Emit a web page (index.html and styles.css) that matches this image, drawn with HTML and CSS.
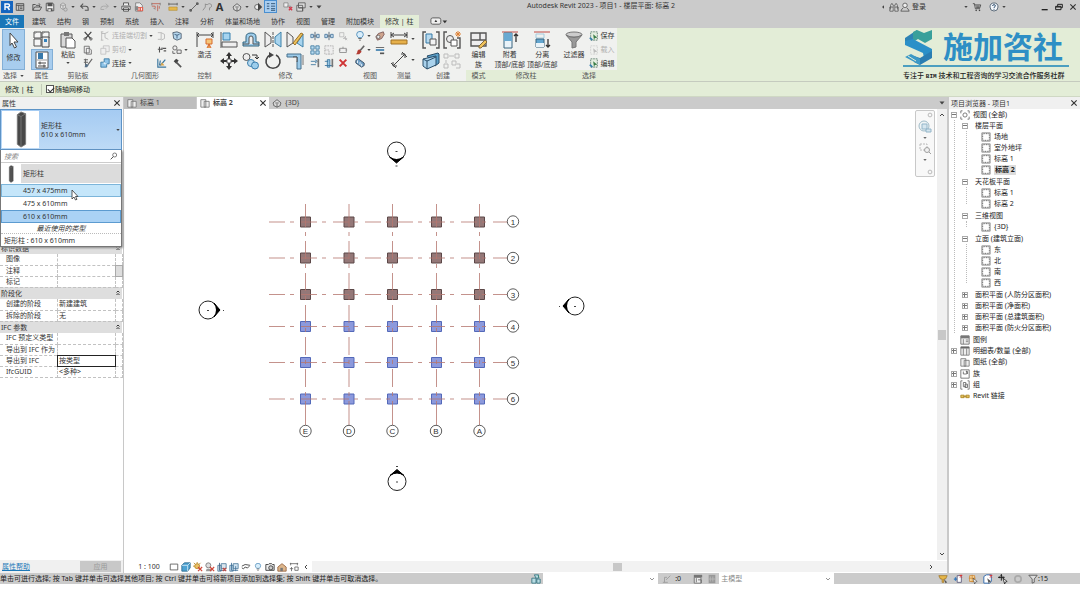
FILE: index.html
```html
<!DOCTYPE html>
<html lang="zh-CN">
<head>
<meta charset="utf-8">
<meta name="viewport" content="width=device-width, initial-scale=1">
<title>Autodesk Revit 2023 - 项目1 - 楼层平面: 标高 2</title>
<link rel="stylesheet" href="styles.css">
</head>
<body>
<svg class="defs" aria-hidden="true">
  <!-- small icons, 12 x 12 -->
  <symbol id="home" viewBox="0 0 12 12"><path d="M1.500 2h9v8h-9zM1.500 4h9M4.500 4v6M6 6h3M6 8h3" fill="none" stroke="#444"/></symbol>
  <symbol id="open" viewBox="0 0 12 12"><path d="M1 10V3h3l1 1h4v2M1 10l2-4h8.500l-2 4zM8 2l2 1" fill="none" stroke="#444"/></symbol>
  <symbol id="save" viewBox="0 0 12 12"><path d="M1.500 1.500h8l1 1v8h-9z" fill="#eee" stroke="#444"/><path d="M3 1h6v4H3zM3 7.500h6V11H3z" fill="#555"/><path d="M4 8.500h3V11H4z" fill="#ddd"/></symbol>
  <symbol id="sync" viewBox="0 0 12 12"><path d="M3 3l3-2 3 2v4L6 9 3 7zM3 3l3 2 3-2M6 5v4" fill="#ddd" stroke="#999"/><circle cx="9" cy="9" r="2" fill="none" stroke="#999"/></symbol>
  <symbol id="undo" viewBox="0 0 12 12"><path d="M5 2L2 5l3 3M2 5h6q3 0 3 3v2H7" fill="none" stroke="#555" stroke-width="1.300"/></symbol>
  <symbol id="redo" viewBox="0 0 12 12"><path d="M7 2l3 3-3 3M10 5H4Q1 5 1 8v1h4" fill="none" stroke="#aaa" stroke-width="1.200"/></symbol>
  <symbol id="print" viewBox="0 0 12 12"><path d="M3 4V1h6v3M1 5h10v4H1zM3 7h6v4H3z" fill="#eee" stroke="#444"/></symbol>
  <symbol id="pdf" viewBox="0 0 12 12"><path d="M2 1h5l3 3v7H2z" fill="#eee" stroke="#777"/><path d="M4 6h7v5H4z" fill="#e06050"/><path d="M1 5h4v5H1z" fill="#888"/><path d="M6 7v3M9 7v3" stroke="#fff"/></symbol>
  <symbol id="dims" viewBox="0 0 12 12"><path d="M1 2h10M1 5h4v3M8 4v7M10 5v3" fill="none" stroke="#c06050"/><path d="M1 1v3M11 1v3M3 7l2 2" stroke="#777"/></symbol>
  <symbol id="ruler" viewBox="0 0 12 12"><path d="M1 2.500h10M1 1v3M11 1v3" stroke="#555" fill="none"/><path d="M1 6h10v4H1z" fill="#e6b84c" stroke="#a98024" stroke-width=".6"/></symbol>
  <symbol id="line" viewBox="0 0 12 12"><path d="M2 10L10 2M1 9h2v2H1zM9 1h2v2H9z" stroke="#555" fill="#777"/></symbol>
  <symbol id="tag" viewBox="0 0 12 12"><path d="M1 10l3-4M4 3h3a2.500 2.500 0 1 1 2 4v3M4 6V2" stroke="#888" fill="none"/></symbol>
  <symbol id="view3d" viewBox="0 0 12 12"><path d="M1 6l5-4 5 4-1 1v2L6 11 2 9V7z" fill="#ddd" stroke="#555"/><path d="M6 7v4M4 6h4" stroke="#555"/></symbol>
  <symbol id="section" viewBox="0 0 12 12"><circle cx="5" cy="6" r="3" fill="#eee" stroke="#555"/><path d="M6 1l5 5-5 5z" fill="#444"/></symbol>
  <symbol id="thin" viewBox="0 0 12 12"><path d="M1 2h3M1 5h3M1 8h3M6 2h5M6 5h5M6 8h5M6 10h5" stroke="#246" fill="none"/></symbol>
  <symbol id="closewin" viewBox="0 0 12 12"><path d="M1 1h5v5H1zM5 5h4v4" fill="#eee" stroke="#888"/><path d="M7 6l4 4M11 6l-4 4" stroke="#d43a4c" stroke-width="1.600"/></symbol>
  <symbol id="switch" viewBox="0 0 12 12"><path d="M3 1h8v6H3zM1 4h7v7H1zM3 7h5v4" fill="#ddd" stroke="#555"/></symbol>
  <symbol id="binoc" viewBox="0 0 12 12"><path d="M2 9V4l1-2h1l1 2v1h2V4l1-2h1l1 2v5M1 6h4v5H1zM7 6h4v5H7z" fill="#ddd" stroke="#555"/></symbol>
  <symbol id="user" viewBox="0 0 12 12"><circle cx="6" cy="4" r="2.700" fill="#eee" stroke="#555"/><path d="M1 11q1-3 3-4M11 11q-1-3-3-4M1 11h10" fill="none" stroke="#555"/></symbol>
  <symbol id="cart" viewBox="0 0 12 12"><path d="M1 2h2l1 6h5l1.500-4.500H3M5 5h4M5 6.500h4" fill="none" stroke="#444"/><circle cx="5" cy="10" r="1" fill="#444"/><circle cx="9" cy="10" r="1" fill="#444"/></symbol>
  <symbol id="help" viewBox="0 0 12 12"><circle cx="6" cy="6" r="4.800" fill="#f4f7fb" stroke="#456"/><path d="M4.300 4.800q0-1.600 1.700-1.600T7.700 4.700Q7.600 5.600 6 6.500v.8M6 8.300v1" fill="none" stroke="#246" stroke-width="1.100"/></symbol>
  <symbol id="cut" viewBox="0 0 12 12"><path d="M2 1l7 8M10 1L3 9" stroke="#444" stroke-width="1.400"/><circle cx="2.500" cy="9.500" r="1.400" fill="none" stroke="#444"/><circle cx="9.500" cy="9.500" r="1.400" fill="none" stroke="#444"/></symbol>
  <symbol id="copy" viewBox="0 0 12 12"><path d="M1.500 1.500h6v8h-6zM4 4h4l2 2v5H4z" fill="#f4f4f4" stroke="#666"/></symbol>
  <symbol id="match" viewBox="0 0 12 12"><path d="M1 2h5M1 5h5M3 1v8M6 8l5-7" stroke="#666" stroke-width="1.300"/><path d="M3 7l4 1-2 3H2z" fill="#566f86"/></symbol>
  <symbol id="cope" viewBox="0 0 12 12"><path d="M2 1v10M2 3h4l4-2M6 3v5l4 2M1 1h3M1 11h3" stroke="#b5b5b5" fill="none"/></symbol>
  <symbol id="cutgeo" viewBox="0 0 12 12"><path d="M1 4h6v7H1zM4 4V1h7v7H7" stroke="#c0c0c0" fill="#eee"/></symbol>
  <symbol id="join" viewBox="0 0 12 12"><path d="M5 1h6v6H8v4H1V5h4z" fill="#8fc4e8" stroke="#33739f"/><path d="M5 5v2h3" stroke="#fff" fill="none"/></symbol>
  <symbol id="wallj" viewBox="0 0 12 12"><path d="M1 2h4v8H1M5 2l4 2v5l-4 2" stroke="#b5b5b5" fill="none"/></symbol>
  <symbol id="split" viewBox="0 0 12 12"><path d="M1 2l5-1 5 2v6L6 11 2 9z" fill="#b7d8ee" stroke="#456"/><path d="M3 4l3 1 3-1M6 5v4" stroke="#357" fill="none"/></symbol>
  <symbol id="beam" viewBox="0 0 12 12"><path d="M1 5h5M3 2v7M7 4h4M8 7h3M6 3v3" stroke="#555" stroke-width="1.300"/></symbol>
  <symbol id="unjoin" viewBox="0 0 12 12"><circle cx="3.500" cy="3.500" r="2.500" fill="#eee" stroke="#555"/><path d="M6 6h5v4H6zM1 7v3h3" fill="#eee" stroke="#555"/></symbol>
  <symbol id="paint" viewBox="0 0 12 12"><path d="M1 1v10h10M3 9l1-6M4 9l6-7" stroke="#39759f" stroke-width="1.400" fill="none"/><path d="M4 9l2-4 3 4z" fill="#dca84c"/></symbol>
  <symbol id="hammer" viewBox="0 0 12 12"><path d="M2 4l3-3 3 2-3 4z" fill="#444"/><path d="M5 5l6 6" stroke="#555" stroke-width="2"/></symbol>
  <symbol id="splitel" viewBox="0 0 12 12"><path d="M1 4h3v4H1zM8 4h3v4H8z" fill="#cbe2f3" stroke="#44749b"/><path d="M6 1v10M4 6h4" stroke="#456"/></symbol>
  <symbol id="array" viewBox="0 0 12 12"><path d="M1 1h4v4H1zM7 1h4v4H7zM1 7h4v4H1zM7 7h4v4H7z" fill="#b9dcf2" stroke="#3d789f"/></symbol>
  <symbol id="scale" viewBox="0 0 12 12"><path d="M1 1h10v10H1zM1 6h5v5" fill="#eee" stroke="#aaa" stroke-dasharray="2 1"/></symbol>
  <symbol id="trim" viewBox="0 0 12 12"><path d="M1 4h6M1 8h6M6 2l3 2-3 2" stroke="#35729c" fill="none"/><path d="M9 1h2v10H9z" fill="#777"/></symbol>
  <symbol id="trim2" viewBox="0 0 12 12"><path d="M1 4h4M1 9h10M4 2h3v9H4z" stroke="#35729c" fill="#9ac8e6"/><path d="M9 1h2v10H9z" fill="#777"/></symbol>
  <symbol id="unpin" viewBox="0 0 12 12"><path d="M2 2h5v5H2zM7 7l4 4M9 6v5M6 9h5" fill="none" stroke="#bbb"/></symbol>
  <symbol id="pin" viewBox="0 0 12 12"><path d="M2 4h8v5H2zM1 6h2M9 6h2M6 2v2" fill="#eee" stroke="#888"/></symbol>
  <symbol id="delete" viewBox="0 0 12 12"><path d="M2 2l8 8M10 2l-8 8" stroke="#cf3434" stroke-width="2.400"/></symbol>
  <symbol id="bulb" viewBox="0 0 12 12"><path d="M4 8Q2 6 2 4a4 3.500 0 0 1 8 0q0 2-2 4z" fill="#d9eefb" stroke="#4585b5"/><path d="M4 9h4M5 11h2" stroke="#555"/></symbol>
  <symbol id="hide" viewBox="0 0 12 12"><path d="M1 7l3-4 6-2 1 3-3 5-5 2z" fill="#cfa58e" stroke="#755"/><circle cx="4" cy="7" r="2" fill="#eee" stroke="#666"/></symbol>
  <symbol id="brush" viewBox="0 0 12 12"><path d="M11 1L6 7" stroke="#666" stroke-width="2"/><path d="M5 5l3 3-3 3H1q2-1 2-4z" fill="#b23c32"/></symbol>
  <symbol id="lw" viewBox="0 0 12 12"><path d="M1 3h10" stroke="#555"/><path d="M1 6h10" stroke="#3a7cad" stroke-width="2"/><path d="M6 10h5" stroke="#555" stroke-width="2"/></symbol>
  <symbol id="hidebox" viewBox="0 0 12 12"><path d="M1 3l3-2 7 5v3L8 11 1 6z" fill="#6f9fc6" stroke="#345"/><path d="M3 3v3M6 5v3M8 7v3" stroke="#fff"/></symbol>
  <symbol id="selset" viewBox="0 0 12 12"><path d="M2 1h8v10H2z" fill="#e4eee0" stroke="#576" stroke-dasharray="2 1"/><path d="M5 4l5 4-3 .5L6 11z" fill="#3a7d46"/><path d="M1 8l3 3" stroke="#347dac" stroke-width="2"/></symbol>
  <symbol id="selload" viewBox="0 0 12 12"><path d="M2 1h8v10H2z" fill="none" stroke="#ccc" stroke-dasharray="2 1"/><path d="M5 4l5 4-3 .5L6 11z" fill="#bbb"/></symbol>
  <symbol id="box" viewBox="0 0 12 12"><path d="M1.500 2.500h9v7h-9z" fill="#fff" stroke="#555"/></symbol>
  <symbol id="cube" viewBox="0 0 12 12"><path d="M1 4l3-3h7v6L8 11H1z" fill="#4ea3d3" stroke="#2d688c"/><path d="M1 4h7v7M8 4l3-3" fill="none" stroke="#d6edf8"/></symbol>
  <symbol id="sun" viewBox="0 0 12 12"><circle cx="5" cy="5" r="3" fill="#e9c165" stroke="#b88524"/><path d="M1 1l2 2M5 0v2M0 5h2M9 1L7 3" stroke="#b88524"/><path d="M6 6l5 5M11 6l-5 5" stroke="#d14537" stroke-width="1.400"/></symbol>
  <symbol id="shadow" viewBox="0 0 12 12"><circle cx="4" cy="4" r="3" fill="#ddd" stroke="#777"/><path d="M2 8h6v3H1z" fill="#999"/><path d="M6 6l5 5M11 6l-5 5" stroke="#d14537" stroke-width="1.400"/></symbol>
  <symbol id="crop" viewBox="0 0 12 12"><path d="M1 4h4v7H1zM5 2h6v6H5z" fill="#dbe6ee" stroke="#4f7d9e"/><path d="M3 1v9h8" fill="none" stroke="#3d5f80"/><path d="M7 7l4 4M11 7l-4 4" stroke="#c7443a" stroke-width="1.300"/></symbol>
  <symbol id="cropview" viewBox="0 0 12 12"><path d="M1 4h4v7H1zM5 2h6v6H5z" fill="#cfe3f1" stroke="#4f7d9e"/><path d="M3 1v9h8M8 5v6" fill="none" stroke="#3d6f98"/></symbol>
  <symbol id="glasses" viewBox="0 0 12 12"><path d="M1 5l4-2 6 1M1 7q2 3 4-1 3 3 5-1" fill="none" stroke="#555" stroke-width="1.200"/></symbol>
  <symbol id="camera" viewBox="0 0 12 12"><path d="M1 3h3l1-1h3l1 1h2v7H1z" fill="#eee" stroke="#333"/><circle cx="7" cy="7" r="2.500" fill="#ccc" stroke="#333"/></symbol>
  <symbol id="house" viewBox="0 0 12 12"><path d="M1 6l5-4 5 4v5H1z" fill="#ddb68c" stroke="#96613c"/><path d="M4 7h3v4H4z" fill="#777"/></symbol>
  <symbol id="limits" viewBox="0 0 12 12"><path d="M1 2h10M2 1v3M10 1v3M3 6v5M1 8h4M7 6h4v4H7z" fill="none" stroke="#666"/></symbol>
  <symbol id="workset" viewBox="0 0 12 12"><path d="M1 5h5v6H1zM4 1h5v4H6zM7 6h4v5H7z" fill="#b8dbe2" stroke="#31727f"/><path d="M8 2l2 2" stroke="#37946f"/></symbol>
  <symbol id="editable" viewBox="0 0 12 12"><path d="M1 10h6M3 10V4h3M5 7l5-5" fill="none" stroke="#999"/></symbol>
  <symbol id="options" viewBox="0 0 12 12"><path d="M1 1h10v3H1z" fill="#777"/><path d="M1.500 4h8v7h-8zM4 5v5M6 7h4v4" fill="#eee" stroke="#666"/></symbol>
  <symbol id="optset" viewBox="0 0 12 12"><path d="M2 1h8v10H2z" fill="#999"/><path d="M4 3v6M7 3v6M2 6h8" stroke="#bbb"/></symbol>
  <symbol id="fork" viewBox="0 0 12 12"><path d="M1 2h10L9 6H7v4H5V6H3z" fill="#e7b84a" stroke="#a67b2a"/><path d="M7 6l4 4-2 1z" fill="#555"/></symbol>
  <symbol id="sellink" viewBox="0 0 12 12"><path d="M1 6h4M3 4v4" stroke="#347bc0" stroke-width="1.500"/><path d="M5 2h5v8H5z" fill="#fff" stroke="#557"/><path d="M8 1l3 3M11 1L8 4" stroke="#d33" stroke-width="1.300"/></symbol>
  <symbol id="selunder" viewBox="0 0 12 12"><path d="M2 2h6v7H2zM5 1v9M1 5h8" fill="#f5dfae" stroke="#d08832"/><path d="M6 5l5 4-2 .5L8 12z" fill="#fff" stroke="#333" stroke-width=".7"/></symbol>
  <symbol id="selface" viewBox="0 0 12 12"><path d="M1 3l3-2h6v8l-2 2H1z" fill="#fff" stroke="#3b71b0" stroke-width="1.200"/><path d="M5 5l5 4-2 .5L7 12z" fill="#555"/><path d="M8 1l3 3M11 1L8 4" stroke="#d33" stroke-width="1.300"/></symbol>
  <symbol id="drag" viewBox="0 0 12 12"><path d="M4 0v8M0 4h8M3 2h2M2 3v2M6 3v2" stroke="#222" stroke-width="1.200"/><path d="M6 5l5 4-2 .5L8 12z" fill="#fff" stroke="#222"/></symbol>
  <symbol id="ring" viewBox="0 0 12 12"><circle cx="6" cy="6" r="3.800" fill="none" stroke="#aaa" stroke-width="2"/></symbol>
  <symbol id="filter" viewBox="0 0 12 12"><path d="M1 1.500h10L7.500 6v4L5 11V6z" fill="#ddd" stroke="#555"/></symbol>
  <symbol id="glass" viewBox="0 0 12 12"><circle cx="7" cy="4.500" r="3" fill="none" stroke="#444"/><path d="M5 7l-4 4" stroke="#444" stroke-width="1.400"/></symbol>
  <symbol id="x" viewBox="0 0 12 12"><path d="M2 2l8 8M10 2l-8 8" stroke="#333" stroke-width="1.700"/></symbol>
  <symbol id="plan" viewBox="0 0 12 12"><path d="M1 2h6v9H1zM5 4h6v7H5z" fill="#eee" stroke="#777"/></symbol>
  <symbol id="sheet" viewBox="0 0 12 12"><path d="M1 1h10v10H1z" fill="#fff" stroke="#888"/><path d="M2 2h8v8H2z" fill="none" stroke="#444" stroke-dasharray="1 1"/></symbol>
  <symbol id="views" viewBox="0 0 12 12"><path d="M1 4V1h2M9 1h2v3M11 8v3H9M3 11H1V8" fill="none" stroke="#666"/><circle cx="6" cy="6" r="2.500" fill="none" stroke="#666"/></symbol>
  <symbol id="legend" viewBox="0 0 12 12"><path d="M1 1h10v10H1z" fill="#eee" stroke="#666"/><path d="M1 1h10v3H1z" fill="#777"/><path d="M4 5v6M7 6h3M7 8h3" stroke="#777"/></symbol>
  <symbol id="sched" viewBox="0 0 12 12"><path d="M1 1h10v10H1zM4 3v8M8 3v8" fill="#eee" stroke="#777"/><path d="M1 1h10v2H1z" fill="#666"/></symbol>
  <symbol id="family" viewBox="0 0 12 12"><path d="M1 1h10v10H1zM4 3v3h4V2M7 3h2v3" fill="#fff" stroke="#666"/></symbol>
  <symbol id="groupi" viewBox="0 0 12 12"><path d="M3 1H1v10h2M9 1h2v10H9M4 3h3v5H4zM6 5h3v4H6z" fill="none" stroke="#666"/></symbol>
  <symbol id="chain" viewBox="0 0 12 12"><path d="M1 5h4v3H1zM7 5h4v3H7zM4 6.500h4" fill="#e2c15c" stroke="#ab8320"/></symbol>
  <symbol id="double" viewBox="0 0 12 12"><path d="M3 5l3-3 3 3M3 10l3-3 3 3" fill="none" stroke="#222" stroke-width="1.800"/></symbol>
  <symbol id="chev" viewBox="0 0 12 12"><path d="M2 4l4 4 4-4" fill="none" stroke="currentColor" stroke-width="1.800"/></symbol>
  <symbol id="caret" viewBox="0 0 12 12"><path d="M1 3h10L6 9z" fill="#444"/></symbol>
  <!-- large icons, 18 x 18 -->
  <symbol id="arrow" viewBox="0 0 18 18"><path d="M5 1l8 9H9l2.500 5-2 1L7 11l-2 2.500z" fill="#fff" stroke="#444" stroke-linejoin="round"/></symbol>
  <symbol id="typeprops" viewBox="0 0 18 18"><path d="M1 2h7v6H1zM9 2h7v6H9zM1 9h7v7H1z" fill="#f6f6f6" stroke="#555"/><path d="M9 7h7v10H9z" fill="#eee" stroke="#444"/><path d="M11 9h3v3h-3z" fill="#3482bd"/><path d="M1 4l3-2M9 4l3-2" stroke="#888"/></symbol>
  <symbol id="props" viewBox="0 0 18 18"><path d="M3 1h12v16H3z" fill="#fff" stroke="#555"/><path d="M5 2h5v6H5z" fill="#3979aa"/><path d="M4 9h10" stroke="#999"/><path d="M5 12h8M5 15h8M7 10.500v3M11 13.500v3" stroke="#444"/></symbol>
  <symbol id="paste" viewBox="0 0 18 18"><path d="M2 3h11v13H2z" fill="#d8d8d8" stroke="#555"/><path d="M5 1h5v4H5z" fill="#777"/><path d="M7 7h6l3 3v7H7z" fill="#fff" stroke="#555"/></symbol>
  <symbol id="activate" viewBox="0 0 18 18"><path d="M1 1v15M17 1v6M1 4h16M3 2L1 4l2 2M15 2l2 2-2 2" fill="none" stroke="#444"/><path d="M10 8h6v5h-6zM13 13v4M11 17l2-4 2 4" fill="#f5c67a" stroke="#d76a2d"/></symbol>
  <symbol id="align" viewBox="0 0 18 18"><path d="M1 1v16M2 11h15v5H2z" fill="#eee" stroke="#555"/><path d="M3 2h7v7H3z" fill="#a6d4f0" stroke="#3580b0"/></symbol>
  <symbol id="offset" viewBox="0 0 18 18"><path d="M1 15h16v-4h-3V6q0-4-5-4T4 6v5H1z" fill="#9ccceb" stroke="#33647f"/><path d="M1 13h6V7q0-2 2-2t2 2v6h6" fill="#eee" stroke="#555"/></symbol>
  <symbol id="mirror" viewBox="0 0 18 18"><path d="M1 1v15l6-4V6z" fill="#eee" stroke="#555"/><path d="M9 1v16" stroke="#555" stroke-dasharray="3 1"/><path d="M17 1v15l-6-4V6z" fill="#a8d4ee" stroke="#3c81a9"/></symbol>
  <symbol id="mirror2" viewBox="0 0 18 18"><path d="M1 1v15l6-4V6z" fill="#eee" stroke="#555"/><path d="M17 3v13l-6-4z" fill="#a8d4ee" stroke="#3c81a9"/><path d="M7 12L15 2l2 1-8 11z" fill="#edc25b" stroke="#9c7228"/></symbol>
  <symbol id="move" viewBox="0 0 18 18"><path d="M9 0l3 4H6zM9 18l3-4H6zM0 9l4-3v6zM18 9l-4-3v6z" fill="#333"/><path d="M9 3v4M9 11v4M3 9h4M11 9h4" stroke="#333" stroke-width="2"/><path d="M7 7h4v4H7z" fill="#fff" stroke="#555"/></symbol>
  <symbol id="copyel" viewBox="0 0 18 18"><circle cx="4.500" cy="5" r="3.500" fill="#eee" stroke="#555"/><circle cx="9" cy="11" r="3.500" fill="#b6daf0" stroke="#3b7eac"/><circle cx="13" cy="13.500" r="3.500" fill="#9bcdec" stroke="#3b7eac"/><path d="M10 3h5v4M13 5l2 2 2-2" fill="none" stroke="#333"/></symbol>
  <symbol id="rotate" viewBox="0 0 18 18"><path d="M12 3a7 7 0 1 1-6 0" fill="none" stroke="#444" stroke-width="1.600"/><path d="M5 0v6l5-3z" fill="#444"/></symbol>
  <symbol id="corner" viewBox="0 0 18 18"><path d="M1 5h10v12h4V2H1z" fill="#9ccbe9" stroke="#47718d"/><path d="M7 5h4v5" stroke="#444" fill="#eee"/><path d="M17 3v10" stroke="#777"/></symbol>
  <symbol id="measure" viewBox="0 0 18 18"><path d="M1 5h16M1 2v6M17 2v6M4 3L1 5l3 2M14 3l3 2-3 2" fill="none" stroke="#444"/><path d="M1 10h16v4H1z" fill="#e6b04a" stroke="#a27324"/></symbol>
  <symbol id="aligned" viewBox="0 0 18 18"><path d="M3 15L15 3M1 12l5 5M12 1l5 5M3 11v4h4M11 3h4v4" fill="none" stroke="#444"/></symbol>
  <symbol id="create1" viewBox="0 0 18 18"><path d="M4 1H1v16h3M14 1h3v16h-3" fill="none" stroke="#555" stroke-width="1.400"/><path d="M4 3h6v9H4z" fill="#b8daee" stroke="#377aa7"/><path d="M8 8h6v6H8z" fill="#f3f3f3" stroke="#555"/></symbol>
  <symbol id="create2" viewBox="0 0 18 18"><path d="M4 1H1v16h3M14 7h3v10h-3" fill="none" stroke="#555" stroke-width="1.400"/><circle cx="7" cy="8" r="3.500" fill="#eee" stroke="#555"/><path d="M8 9h6v6H8z" fill="#fff" stroke="#555"/><path d="M15 0v6M12 3h6M13 1l4 4M17 1l-4 4" stroke="#df8134"/></symbol>
  <symbol id="create3" viewBox="0 0 18 18"><path d="M5 4l11-3 1 1v9l-4 3z" fill="#5b9fc8" stroke="#294d68"/><path d="M1 7l13-3v9L5 17l-4-3z" fill="#a9d2ec" stroke="#294d68"/><path d="M1 7l4 2v8M5 9l9-4" fill="none" stroke="#294d68"/></symbol>
  <symbol id="create4" viewBox="0 0 18 18"><path d="M1 2h4v4H1zM12 2h4v4h-4zM6 4h5M3 8v3M1 12h4v4H1zM9 9h4v4H9zM14 12h3v4h-4" fill="none" stroke="#bbb"/></symbol>
  <symbol id="editfam" viewBox="0 0 18 18"><path d="M1 2h15v13H1zM10 2v7M1 9h15" fill="#eee" stroke="#555" stroke-width="1.400"/><path d="M9 15l6-6 2 2-6 6H9z" fill="#efc25a" stroke="#866a38"/></symbol>
  <symbol id="attach" viewBox="0 0 18 18"><path d="M1 1h16" stroke="#c04b45"/><path d="M3 2h8v15H3z" fill="#e9f3f9" stroke="#38657f"/><path d="M3 2h8v8H3z" fill="#69a9d1"/><path d="M15 3v8M13 5l2-2 2 2" fill="none" stroke="#333" stroke-width="1.300"/></symbol>
  <symbol id="detach" viewBox="0 0 18 18"><path d="M1 1h16" stroke="#c04b45"/><path d="M3 3h8v4H3z" fill="none" stroke="#a5ccdf"/><path d="M3 8h8v8H3z" fill="#62a6d0" stroke="#38657f"/><path d="M3 12h8v4H3z" fill="#e9f3f9"/><path d="M15 8v8M13 14l2 2 2-2" fill="none" stroke="#333" stroke-width="1.300"/></symbol>
  <symbol id="funnel" viewBox="0 0 18 18"><ellipse cx="9" cy="3.500" rx="8" ry="2.500" fill="#ccc" stroke="#777"/><path d="M1 4l6 7v6l4-1v-5l6-7q-8 5-16 0z" fill="#999" stroke="#777"/></symbol>
  <symbol id="column" viewBox="0 0 18 40"><path d="M5 4l4-3 5 2v33l-5 3-4-3z" fill="#484848" stroke="#777"/><path d="M5 4l4 2 5-3M9 6v32" fill="none" stroke="#777"/></symbol>
</svg>

<header class="titlebar">
  <div class="quick">
    <button aria-label="应用程序"><svg class="i12" viewBox="0 0 12 12"><path d="M0 0h12v12H0z" fill="#1565c0"/><path d="M4 9V3h3q1.500 0 1.500 1.500T7 6H4M6.500 6L8.500 9" fill="none" stroke="#fff" stroke-width="1.400"/></svg></button>
    <button aria-label="主页"><svg class="i10"><use href="#home"/></svg></button>
    <button class="apart" aria-label="打开"><svg class="i10"><use href="#open"/></svg></button>
    <button aria-label="保存"><svg class="i10"><use href="#save"/></svg></button>
    <button aria-label="同步"><svg class="i10"><use href="#sync"/></svg></button>
    <button class="drop" aria-label="同步选项"><svg class="i4"><use href="#caret"/></svg></button>
    <button aria-label="放弃"><svg class="i10"><use href="#undo"/></svg></button>
    <button class="drop" aria-label="放弃列表"><svg class="i4"><use href="#caret"/></svg></button>
    <button aria-label="重做"><svg class="i10"><use href="#redo"/></svg></button>
    <button class="drop" aria-label="重做列表"><svg class="i4"><use href="#caret"/></svg></button>
    <button aria-label="打印"><svg class="i10"><use href="#print"/></svg></button>
    <button aria-label="导出"><svg class="i10"><use href="#pdf"/></svg></button>
    <button class="apart" aria-label="尺寸"><svg class="i10"><use href="#dims"/></svg></button>
    <button class="apart" aria-label="测量"><svg class="i10"><use href="#ruler"/></svg></button>
    <button class="drop" aria-label="测量选项"><svg class="i4"><use href="#caret"/></svg></button>
    <button aria-label="对齐标注"><svg class="i10"><use href="#line"/></svg></button>
    <button aria-label="标记"><svg class="i10"><use href="#tag"/></svg></button>
    <button class="letter" aria-label="文字">A</button>
    <button class="apart" aria-label="三维视图"><svg class="i10"><use href="#view3d"/></svg></button>
    <button class="drop" aria-label="三维选项"><svg class="i4"><use href="#caret"/></svg></button>
    <button aria-label="剖面"><svg class="i10"><use href="#section"/></svg></button>
    <button class="on" aria-label="细线"><svg class="i10"><use href="#thin"/></svg></button>
    <button class="apart" aria-label="关闭非活动视图"><svg class="i10"><use href="#closewin"/></svg></button>
    <button aria-label="切换窗口"><svg class="i10"><use href="#switch"/></svg></button>
    <button class="drop" aria-label="窗口列表"><svg class="i4"><use href="#caret"/></svg></button>
    <button class="drop" aria-label="自定义"><svg class="i6"><use href="#caret"/></svg></button>
  </div>
  <h1 class="title">Autodesk Revit 2023 - 项目1 - 楼层平面: 标高 2</h1>
  <div class="account">
    <button class="drop" aria-label="收起"><svg class="i4 turn"><use href="#caret"/></svg></button>
    <button aria-label="搜索"><svg class="i10"><use href="#binoc"/></svg></button>
    <button class="login"><svg class="i10"><use href="#user"/></svg>登录</button>
    <button class="drop" aria-label="账户菜单"><svg class="i4"><use href="#caret"/></svg></button>
    <button aria-label="商店"><svg class="i10"><use href="#cart"/></svg></button>
    <button class="apart" aria-label="帮助"><svg class="i10"><use href="#help"/></svg></button>
    <button class="drop" aria-label="帮助菜单"><svg class="i4"><use href="#caret"/></svg></button>
  </div>
  <div class="window">
    <button aria-label="最小化"><svg class="i8" viewBox="0 0 12 12"><path d="M1 10h9" stroke="#222" stroke-width="2"/></svg></button>
    <button aria-label="还原"><svg class="i8" viewBox="0 0 12 12"><path d="M4 2h7v5H9M1 5h8v5H1zM4 2v3M1 6h8" fill="none" stroke="#222" stroke-width="1.500"/></svg></button>
    <button aria-label="关闭"><svg class="i8"><use href="#x"/></svg></button>
  </div>
</header>

<nav class="tabs">
  <a class="file" href="#file">文件</a>
  <a href="#t1">建筑</a><a href="#t2">结构</a><a href="#t3">钢</a><a href="#t4">预制</a><a href="#t5">系统</a><a href="#t6">插入</a><a href="#t7">注释</a><a href="#t8">分析</a><a href="#t9">体量和场地</a><a href="#t10">协作</a><a href="#t11">视图</a><a href="#t12">管理</a><a href="#t13">附加模块</a>
  <a class="current" href="#t14">修改 | 柱</a>
  <button aria-label="显示选项"><svg class="toggle-icon" viewBox="0 0 20 10"><rect x="1" y="1" width="11" height="7" rx="2" fill="#eee" stroke="#555"/><path d="M5 5.500h3L6.500 3z" fill="#333"/><path d="M14 4h5l-2.500 3z" fill="#333"/></svg></button>
</nav>

<section class="ribbon">
  <div class="panel p-select">
    <div class="body"><button class="big on"><svg class="i18"><use href="#arrow"/></svg>修改</button></div>
    <div class="label">选择 <svg class="i4"><use href="#caret"/></svg></div>
  </div>
  <div class="panel p-props">
    <div class="body"><div class="stack"><button aria-label="类型属性"><svg class="i18"><use href="#typeprops"/></svg></button><button class="on framed" aria-label="属性"><svg class="i18"><use href="#props"/></svg></button></div></div>
    <div class="label">属性</div>
  </div>
  <div class="panel p-clip">
    <div class="body">
      <button class="big"><svg class="i18"><use href="#paste"/></svg>粘贴<svg class="i4"><use href="#caret"/></svg></button>
      <div class="rows"><button aria-label="剪切"><svg class="i10"><use href="#cut"/></svg></button><button aria-label="复制"><svg class="i10"><use href="#copy"/></svg></button><button aria-label="匹配"><svg class="i10"><use href="#match"/></svg></button></div>
    </div>
    <div class="label">剪贴板</div>
  </div>
  <div class="panel p-geo">
    <div class="body">
      <div class="rows left">
        <button class="off"><svg class="i10"><use href="#cope"/></svg>连接端切割 <svg class="i4"><use href="#caret"/></svg></button>
        <button class="off"><svg class="i10"><use href="#cutgeo"/></svg>剪切 <svg class="i4"><use href="#caret"/></svg></button>
        <button><svg class="i10"><use href="#join"/></svg>连接 <svg class="i4"><use href="#caret"/></svg></button>
      </div>
      <div class="rows"><button aria-label="墙连接"><svg class="i10"><use href="#wallj"/></svg></button><button aria-label="梁柱连接"><svg class="i10"><use href="#beam"/></svg></button><button aria-label="填色"><svg class="i10"><use href="#paint"/></svg></button></div>
      <div class="rows left"><button aria-label="拆分面"><svg class="i10"><use href="#split"/></svg></button><button aria-label="取消连接"><svg class="i10"><use href="#unjoin"/></svg><svg class="i4"><use href="#caret"/></svg></button><button aria-label="拆除"><svg class="i10"><use href="#hammer"/></svg></button></div>
    </div>
    <div class="label">几何图形</div>
  </div>
  <div class="panel p-ctrl">
    <div class="body"><button class="big"><svg class="i18"><use href="#activate"/></svg>激活</button></div>
    <div class="label">控制</div>
  </div>
  <div class="panel p-modify">
    <div class="body">
      <div class="grid4">
        <button aria-label="对齐"><svg class="i18"><use href="#align"/></svg></button><button aria-label="偏移"><svg class="i18"><use href="#offset"/></svg></button><button aria-label="镜像拾取轴"><svg class="i18"><use href="#mirror"/></svg></button><button aria-label="镜像绘制轴"><svg class="i18"><use href="#mirror2"/></svg></button>
        <button aria-label="移动"><svg class="i18"><use href="#move"/></svg></button><button aria-label="复制图元"><svg class="i18"><use href="#copyel"/></svg></button><button aria-label="旋转"><svg class="i18"><use href="#rotate"/></svg></button><button aria-label="修剪为角"><svg class="i18"><use href="#corner"/></svg></button>
      </div>
      <div class="rows"><button aria-label="拆分图元"><svg class="i10"><use href="#splitel"/></svg></button><button aria-label="阵列"><svg class="i10"><use href="#array"/></svg></button><button aria-label="修剪"><svg class="i10"><use href="#trim"/></svg></button></div>
      <div class="rows"><button aria-label="用间隙拆分"><svg class="i10"><use href="#splitel"/></svg></button><button aria-label="缩放"><svg class="i10"><use href="#scale"/></svg></button><button aria-label="延伸"><svg class="i10"><use href="#trim2"/></svg></button></div>
      <div class="rows"><button aria-label="解锁"><svg class="i10"><use href="#unpin"/></svg></button><button aria-label="锁定"><svg class="i10"><use href="#pin"/></svg></button><button aria-label="删除"><svg class="i10"><use href="#delete"/></svg></button></div>
    </div>
    <div class="label">修改</div>
  </div>
  <div class="panel p-view">
    <div class="body">
      <div class="rows left"><button aria-label="隐藏"><svg class="i10"><use href="#bulb"/></svg> <svg class="i4"><use href="#caret"/></svg></button><button aria-label="替换"><svg class="i10"><use href="#brush"/></svg> <svg class="i4"><use href="#caret"/></svg></button><button aria-label="选择框"><svg class="i10"><use href="#hidebox"/></svg></button></div>
      <div class="rows"><button aria-label="置换"><svg class="i10"><use href="#hide"/></svg></button><button aria-label="线处理"><svg class="i10"><use href="#lw"/></svg></button></div>
    </div>
    <div class="label">视图</div>
  </div>
  <div class="panel p-measure">
    <div class="body"><div class="stack"><button aria-label="测量"><svg class="i18"><use href="#measure"/></svg><svg class="i4"><use href="#caret"/></svg></button><button aria-label="标注"><svg class="i18"><use href="#aligned"/></svg><svg class="i4"><use href="#caret"/></svg></button></div></div>
    <div class="label">测量</div>
  </div>
  <div class="panel p-create">
    <div class="body"><div class="grid2"><button aria-label="创建组"><svg class="i18"><use href="#create1"/></svg></button><button aria-label="创建类似"><svg class="i18"><use href="#create2"/></svg></button><button aria-label="创建部件"><svg class="i18"><use href="#create3"/></svg></button><button aria-label="创建零件"><svg class="i18"><use href="#create4"/></svg></button></div></div>
    <div class="label">创建</div>
  </div>
  <div class="panel p-mode context">
    <div class="body"><button class="big"><svg class="i18"><use href="#editfam"/></svg>编辑<br>族</button></div>
    <div class="label">模式</div>
  </div>
  <div class="panel p-col context">
    <div class="body"><button class="big"><svg class="i18"><use href="#attach"/></svg>附着<br>顶部/底部</button><button class="big"><svg class="i18"><use href="#detach"/></svg>分离<br>顶部/底部</button></div>
    <div class="label">修改柱</div>
  </div>
  <div class="panel p-sel context">
    <div class="body">
      <button class="big"><svg class="i18"><use href="#funnel"/></svg>过滤器</button>
      <div class="rows left"><button><svg class="i10"><use href="#selset"/></svg>保存</button><button class="off"><svg class="i10"><use href="#selload"/></svg>载入</button><button><svg class="i10"><use href="#selset"/></svg>编辑</button></div>
    </div>
    <div class="label">选择</div>
  </div>
  <div class="brand">
    <div class="brand-top">
      <svg class="brand-mark" viewBox="0 0 30 36"><path d="M2 9L14 1v9l-4 2v5l-8-4z" fill="#2d83b4"/><path d="M14 1l7 3 8-3v9l-7 4-7-4-5 3V3z" fill="#38a09b"/><path d="M2 12l8-2 19 10v8l-8 1-1-5L2 16z" fill="#2b90c8"/><path d="M29 22v7l-12 7-6-3v-6l6 2z" fill="#2a7db2"/><path d="M2 28l6-3 9 5v6z" fill="#3c99c6"/><path d="M2 29l7 4M5 27l8 5" stroke="#e3edd7"/></svg>
      <span class="brand-name">施加咨社</span>
    </div>
    <div class="brand-note">专注于 <b>BIM</b> 技术和工程咨询的学习交流合作服务社群</div>
  </div>
</section>

<div class="options">
  <span class="mode">修改 | 柱</span>
  <label><input type="checkbox" checked>随轴网移动</label>
</div>

<main class="work">
  <aside class="properties">
    <div class="pane-head"><h2>属性</h2><button aria-label="关闭属性"><svg class="i8"><use href="#x"/></svg></button></div>
    <div class="type">
      <button class="type-current"><span class="thumb"><svg class="col-big"><use href="#column"/></svg></span><span class="type-name">矩形柱<br>610 x 610mm</span><svg class="i4"><use href="#caret"/></svg></button>
      <div class="type-menu">
        <div class="search"><input type="text" placeholder="搜索" aria-label="搜索"><svg class="i8"><use href="#glass"/></svg></div>
        <div class="family"><span class="family-icon"><svg class="col-small"><use href="#column"/></svg></span><span class="family-name">矩形柱</span></div>
        <button class="option hover">457 x 475mm</button>
        <button class="option">475 x 610mm</button>
        <button class="option chosen">610 x 610mm</button>
        <div class="recent">最近使用的类型</div>
        <button class="last">矩形柱 : 610 x 610mm</button>
        <svg class="cursor" viewBox="0 0 8 12"><path d="M1 1v9l2-2 1.500 3 1.500-.7L4.500 7.500H7z" fill="#fff" stroke="#333" stroke-width=".8"/></svg>
      </div>
    </div>
    <table class="props">
      <tbody>
        <tr class="group"><th colspan="2">标识数据</th><td><svg class="i6"><use href="#double"/></svg></td></tr>
        <tr><th>图像</th><td></td><td></td></tr>
        <tr><th>注释</th><td></td><td class="pick"></td></tr>
        <tr><th>标记</th><td></td><td></td></tr>
        <tr class="group"><th colspan="2">阶段化</th><td><svg class="i6"><use href="#double"/></svg></td></tr>
        <tr><th>创建的阶段</th><td>新建建筑</td><td></td></tr>
        <tr><th>拆除的阶段</th><td>无</td><td></td></tr>
        <tr class="group"><th colspan="2">IFC 参数</th><td><svg class="i6"><use href="#double"/></svg></td></tr>
        <tr><th>IFC 预定义类型</th><td></td><td></td></tr>
        <tr><th>导出到 IFC 作为</th><td></td><td></td></tr>
        <tr><th>导出到 IFC</th><td class="focus">按类型</td><td></td></tr>
        <tr><th>IfcGUID</th><td>&lt;多种&gt;</td><td></td></tr>
      </tbody>
    </table>
    <div class="props-foot"><a href="#help">属性帮助</a><button disabled>应用</button></div>
  </aside>

  <section class="viewer">
    <div class="doc-tabs">
      <a class="doc idle" href="#v1"><svg class="i10"><use href="#plan"/></svg>标高 1</a>
      <div class="doc active"><a href="#v2"><svg class="i10"><use href="#plan"/></svg>标高 2</a><button aria-label="关闭视图"><svg class="i8"><use href="#x"/></svg></button></div>
      <a class="doc" href="#v3"><svg class="i10"><use href="#view3d"/></svg>{3D}</a>
      <button class="doc-list" aria-label="视图列表"><svg class="i6"><use href="#caret"/></svg></button>
    </div>
    <div class="canvas">
      <svg class="drawing" viewBox="124 109 813 451" role="img" aria-label="柱网平面">
        <defs>
          <path id="gridh" d="M269 0H508" stroke-dasharray="16 5 4 7"/>
          <path id="cols" d="M300.500-5h10v10h-10zM344-5h10v10h-10zM387.500-5h10v10h-10zM431.500-5h10v10h-10zM474.500-5h10v10h-10z"/>
          <g id="elev"><circle r="9" fill="#fff" stroke="#222"/><path d="M-7 6Q0 11 7 6L0 12z" fill="#000" stroke="#000"/></g>
        </defs>
        <g fill="#947878" stroke="#5c4848"><use href="#cols" y="222"/><use href="#cols" y="258"/><use href="#cols" y="294.500"/></g>
        <g fill="#8c99dc" stroke="#5369b9"><use href="#cols" y="326.500"/><use href="#cols" y="362.500"/><use href="#cols" y="399"/></g>
        <g stroke="#b5776f" stroke-opacity=".8" fill="none">
          <use href="#gridh" y="222"/><use href="#gridh" y="258"/><use href="#gridh" y="294.500"/><use href="#gridh" y="326.500"/><use href="#gridh" y="362.500"/><use href="#gridh" y="399"/>
          <path d="M305.500 204v5M349 204v5M392.500 204v5M436.500 204v5M479.500 204v5M305.500 401v24M349 401v24M392.500 401v24M436.500 401v24M479.500 401v24"/>
          <path d="M305.500 209v192M349 209v192M392.500 209v192M436.500 209v192M479.500 209v192" stroke-dasharray="18 5 4 5"/>
        </g>
        <g fill="#fff" stroke="#333" stroke-width=".8">
          <circle cx="513" cy="221.500" r="5.700"/><circle cx="513" cy="258" r="5.700"/><circle cx="513" cy="294.500" r="5.700"/><circle cx="513" cy="326.500" r="5.700"/><circle cx="513" cy="362.500" r="5.700"/><circle cx="513" cy="399" r="5.700"/>
          <circle cx="305.500" cy="431" r="5.700"/><circle cx="349" cy="431" r="5.700"/><circle cx="392.500" cy="431" r="5.700"/><circle cx="436" cy="431" r="5.700"/><circle cx="479.500" cy="431" r="5.700"/>
        </g>
        <g class="bubbles">
          <text x="513" y="225">1</text><text x="513" y="261">2</text><text x="513" y="298">3</text><text x="513" y="330">4</text><text x="513" y="366">5</text><text x="513" y="402">6</text>
          <text x="305.500" y="434">E</text><text x="349" y="434">D</text><text x="392.500" y="434">C</text><text x="436" y="434">B</text><text x="479.500" y="434">A</text>
        </g>
        <use href="#elev" transform="translate(396.500 151)"/><use href="#elev" transform="translate(208 310) rotate(-90)"/><use href="#elev" transform="translate(575 306) rotate(90)"/><use href="#elev" transform="translate(397 481.500) rotate(180)"/>
        <path d="M395.500 151.500h2M395.500 166h2M207 310.500h2M223 310.500h1M574 306.500h2M559 306.500h1M396 482h2M396 466.500h2" stroke="#444"/>
      </svg>
      <div class="navbar">
        <button aria-label="关闭导航栏"><svg class="i6"><use href="#ring"/></svg></button>
        <button aria-label="控制盘"><svg class="i14" viewBox="0 0 14 14"><circle cx="6" cy="6" r="5" fill="#edf3f5" stroke="#8ab"/><path d="M4 4h5v5H4zM8 9h5v3H8z" fill="#cde1ec" stroke="#79a3bc"/></svg></button>
        <svg class="i4"><use href="#caret"/></svg>
        <button aria-label="区域放大"><svg class="i14" viewBox="0 0 14 14"><path d="M2 2h7v6H2z" fill="none" stroke="#aaa" stroke-dasharray="2 1"/><circle cx="9" cy="8" r="2.500" fill="#eee" stroke="#888"/><path d="M11 10l2 2" stroke="#888"/></svg></button>
        <svg class="i4"><use href="#caret"/></svg>
        <button class="end" aria-label="导航栏选项"><svg class="i6"><use href="#ring"/></svg></button>
      </div>
      <div class="vscroll"><svg class="i6 flip"><use href="#chev"/></svg><span class="thumb-v"></span><svg class="i6"><use href="#chev"/></svg></div>
    </div>
    <div class="viewbar">
      <button class="scale">1 : 100</button>
      <div class="view-tools">
        <button aria-label="详细程度"><svg class="i10"><use href="#box"/></svg></button><button aria-label="视觉样式"><svg class="i10"><use href="#cube"/></svg></button><button aria-label="日光"><svg class="i10"><use href="#sun"/></svg></button><button aria-label="阴影"><svg class="i10"><use href="#shadow"/></svg></button><button aria-label="裁剪"><svg class="i10"><use href="#crop"/></svg></button><button aria-label="裁剪区域"><svg class="i10"><use href="#cropview"/></svg></button><button aria-label="临时隐藏"><svg class="i10"><use href="#glasses"/></svg></button><button aria-label="显示隐藏"><svg class="i8"><use href="#bulb"/></svg></button><button aria-label="临时视图属性"><svg class="i10"><use href="#camera"/></svg></button><button aria-label="分析模型"><svg class="i10"><use href="#house"/></svg></button><button aria-label="约束"><svg class="i10"><use href="#limits"/></svg></button><button aria-label="更多"><svg class="i6 turn"><use href="#chev"/></svg></button>
      </div>
      <div class="hscroll"><span class="thumb-h"></span><svg class="i6 right"><use href="#chev"/></svg></div>
    </div>
  </section>

  <aside class="browser">
    <div class="pane-head"><h2>项目浏览器 - 项目1</h2><button aria-label="关闭浏览器"><svg class="i8"><use href="#x"/></svg></button></div>
    <ul class="tree">
      <li><div class="node"><i class="minus"></i><svg class="i10"><use href="#views"/></svg>视图 (全部)</div>
        <ul>
          <li><div class="node"><i class="minus"></i>楼层平面</div>
            <ul>
              <li><div class="node"><svg class="i10"><use href="#sheet"/></svg>场地</div></li>
              <li><div class="node"><svg class="i10"><use href="#sheet"/></svg>室外地坪</div></li>
              <li><div class="node"><svg class="i10"><use href="#sheet"/></svg>标高 1</div></li>
              <li><div class="node"><svg class="i10"><use href="#sheet"/></svg><b>标高 2</b></div></li>
            </ul></li>
          <li class="gap"><div class="node"><i class="minus"></i>天花板平面</div>
            <ul>
              <li><div class="node"><svg class="i10"><use href="#sheet"/></svg>标高 1</div></li>
              <li><div class="node"><svg class="i10"><use href="#sheet"/></svg>标高 2</div></li>
            </ul></li>
          <li class="gap"><div class="node"><i class="minus"></i>三维视图</div>
            <ul><li><div class="node"><svg class="i10"><use href="#sheet"/></svg>{3D}</div></li></ul></li>
          <li class="gap"><div class="node"><i class="minus"></i>立面 (建筑立面)</div>
            <ul>
              <li><div class="node"><svg class="i10"><use href="#sheet"/></svg>东</div></li>
              <li><div class="node"><svg class="i10"><use href="#sheet"/></svg>北</div></li>
              <li><div class="node"><svg class="i10"><use href="#sheet"/></svg>南</div></li>
              <li><div class="node"><svg class="i10"><use href="#sheet"/></svg>西</div></li>
            </ul></li>
          <li class="gap"><div class="node"><i class="plus"></i>面积平面 (人防分区面积)</div></li>
          <li><div class="node"><i class="plus"></i>面积平面 (净面积)</div></li>
          <li><div class="node"><i class="plus"></i>面积平面 (总建筑面积)</div></li>
          <li><div class="node"><i class="plus"></i>面积平面 (防火分区面积)</div></li>
        </ul></li>
      <li class="gap"><div class="node"><i></i><svg class="i10"><use href="#legend"/></svg>图例</div></li>
      <li><div class="node"><i class="plus"></i><svg class="i10"><use href="#sched"/></svg>明细表/数量 (全部)</div></li>
      <li><div class="node"><i></i><svg class="i10"><use href="#plan"/></svg>图纸 (全部)</div></li>
      <li class="gap"><div class="node"><i class="plus"></i><svg class="i10"><use href="#family"/></svg>族</div></li>
      <li><div class="node"><i class="plus"></i><svg class="i10"><use href="#groupi"/></svg>组</div></li>
      <li><div class="node"><i></i><svg class="i10"><use href="#chain"/></svg>Revit 链接</div></li>
    </ul>
  </aside>
</main>

<footer class="status">
  <div class="hint">单击可进行选择; 按 Tab 键并单击可选择其他项目; 按 Ctrl 键并单击可将新项目添加到选择集; 按 Shift 键并单击可取消选择。</div>
  <button aria-label="工作集"><svg class="i10"><use href="#workset"/></svg></button>
  <div class="combo"><select aria-label="活动工作集"><option></option></select><svg class="i6"><use href="#chev"/></svg></div>
  <div class="requests"><svg class="i10"><use href="#editable"/></svg><span>:0</span></div>
  <button aria-label="设计选项"><svg class="i10"><use href="#options"/></svg></button>
  <button aria-label="选项集"><svg class="i10"><use href="#optset"/></svg></button>
  <div class="combo"><select aria-label="活动设计选项"><option>主模型</option></select><svg class="i6"><use href="#chev"/></svg></div>
  <div class="picks">
    <button aria-label="选择链接"><svg class="i10"><use href="#fork"/></svg></button><button aria-label="选择链接图元"><svg class="i10"><use href="#sellink"/></svg></button><button aria-label="选择基线图元"><svg class="i10"><use href="#selunder"/></svg></button><button aria-label="按面选择"><svg class="i10"><use href="#selface"/></svg></button><button aria-label="选择时拖拽"><svg class="i10"><use href="#drag"/></svg></button><button aria-label="后台进程"><svg class="i10"><use href="#ring"/></svg></button><button class="count"><svg class="i10"><use href="#filter"/></svg>:15</button>
  </div>
</footer>
</body>
</html>
```

FILE: styles.css
```css
* { box-sizing: border-box; }

html, body { height: 100%; margin: 0; }

body {
  display: flex;
  flex-direction: column;
  padding-bottom: 24px;
  background: #fff;
  color: #333;
  font: 7px/11px "Noto Sans", "Noto Sans CJK SC", sans-serif;
  overflow: hidden;
}

button, input, select {
  margin: 0;
  padding: 0;
  border: 0;
  background: none;
  color: inherit;
  font: inherit;
  appearance: none;
}

button { display: flex; align-items: center; justify-content: center; white-space: nowrap; }
a { color: inherit; text-decoration: none; }
h1, h2 { margin: 0; font-size: 7px; font-weight: 400; }
svg { flex: none; display: block; }

.defs { position: absolute; width: 0; height: 0; }
.i4 { width: 4px; height: 4px; }
.i6 { width: 6px; height: 6px; }
.i8 { width: 8px; height: 8px; }
.i10 { width: 10px; height: 10px; }
.i12 { width: 12px; height: 12px; }
.i14 { width: 14px; height: 14px; }
.i18 { width: 18px; height: 18px; }
.flip { transform: rotate(180deg); }
.turn { transform: rotate(90deg); }
.right { transform: rotate(-90deg); }

/* Title bar */
.titlebar { display: flex; height: 15px; background: #cbcbcb; }
.quick, .account, .window { display: flex; height: 13px; }
.quick button, .account button { width: 13px; }
.quick .drop, .account .drop { width: 8px; }
.quick .apart, .account .apart { margin-left: 4px; }
.quick .on { background: #a9cdef; border: 1px solid #4a8fd0; }
.quick .letter { font-size: 11px; font-weight: 700; }
.title { flex: 1; text-align: center; white-space: nowrap; }
.account .login { width: 62px; justify-content: flex-start; gap: 2px; }
.window { margin-left: 30px; }
.window button { width: 14px; }

/* Ribbon tabs */
.tabs { display: flex; gap: 11px; height: 13px; background: #cbcbcb; line-height: 13px; white-space: nowrap; }
.tabs .file { width: 24px; margin-right: -3px; background: #1976b8; color: #fff; text-align: center; }
.tabs .current { margin: 0 0 0 -5px; padding: 0 5px; background: #e3edd7; }
.toggle-icon { width: 18px; height: 9px; }

/* Ribbon */
.ribbon { display: flex; height: 54px; background: #e3edd7; border-bottom: 1px solid #c5cbbf; }
.panel { display: flex; flex-direction: column; flex: none; background: #f0f1ef; }
.context .label { background: #e3edd7; }
.body { display: flex; justify-content: center; height: 42px; padding-top: 1px; }
.label { display: flex; align-items: center; justify-content: center; gap: 3px; height: 11px; color: #555; }
.p-select { width: 27px; }
.p-props { width: 29px; }
.p-clip { width: 44px; }
.p-geo { width: 90px; }
.p-ctrl { width: 29px; }
.p-modify { width: 133px; }
.p-view { width: 36px; }
.p-measure { width: 32px; }
.p-create { width: 46px; }
.p-mode { width: 25px; }
.p-col { width: 70px; }
.p-sel { width: 56px; }
.big { flex-direction: column; justify-content: flex-start; gap: 1px; padding-top: 2px; line-height: 10px; text-align: center; }
.p-select .big { width: 23px; gap: 3px; }
.p-col .body { gap: 2px; }
.p-clip .body { gap: 6px; padding-right: 4px; }
.on { background: #a8cdee; }
.p-select .on, .framed { border: 1px solid #83afd6; }
.stack { display: flex; flex-direction: column; }
.stack button { height: 21px; gap: 3px; }
.stack .framed { width: 22px; }
.rows { display: flex; flex-direction: column; }
.rows button { height: 14px; gap: 2px; }
.rows.left button { justify-content: flex-start; }
.p-geo .body { justify-content: flex-start; gap: 5px; }
.p-geo .left:first-child { width: 52px; }
.off { color: #b0b0b0; }
.grid4 { display: grid; grid-template-columns: repeat(4, 22px); grid-auto-rows: 21px; }
.grid2 { display: grid; grid-template-columns: repeat(2, 21px); grid-auto-rows: 21px; }
.p-modify .body { gap: 4px; padding-right: 6px; }
.p-view .body { gap: 4px; }
.p-measure .body, .p-create .body { padding-right: 4px; }
.p-sel .body { gap: 4px; }

.brand { width: 166px; margin: 0 11px 0 auto; }
.brand-top { display: flex; align-items: center; gap: 10px; height: 39px; border-bottom: 2px solid #4c9fc0; }
.brand-mark { width: 30px; height: 36px; }
.brand-name { height: 38px; color: #2e8fc5; font: 700 30px/34px "Noto Sans CJK SC", sans-serif; }
.brand-note { padding-top: 3px; color: #222; font-weight: 500; white-space: nowrap; }
.brand-note b { font-family: "Liberation Mono", monospace; font-size: 6px; }

/* Options bar */
.options { display: flex; align-items: center; height: 15px; padding-left: 5px; background: #e3edd7; border-bottom: 1px solid #cfd8c4; color: #222; }
.options .mode { width: 37px; border-right: 1px solid #c3cbb8; }
.options label { display: flex; align-items: center; gap: 1px; padding-left: 4px; }
.options input { width: 8px; height: 8px; border: 1px solid #555; background: #fff; }
.options input:checked::after { content: ""; display: block; width: 5px; height: 3px; margin: 1px 0 0 1px; border: solid #333; border-width: 0 0 1px 1px; transform: rotate(-45deg); }

/* Work area */
.work { display: flex; flex: 1; min-height: 0; }
.pane-head { display: flex; justify-content: space-between; align-items: center; height: 12px; padding: 0 2px; background: #f0f0f0; }

.properties { display: flex; flex-direction: column; flex: none; width: 124px; border-right: 1px solid #c8c8c8; }
.type { position: relative; height: 133px; }
.type-current { width: 122px; height: 41px; justify-content: flex-start; padding: 1px; background: linear-gradient(#a5cbf2, #bddaf6); border: 1px solid #5d93c6; text-align: left; }
.thumb { display: flex; justify-content: center; align-items: center; width: 37px; height: 37px; background: #fff; }
.col-big { width: 18px; height: 37px; }
.col-small { width: 8px; height: 18px; }
.type-name { flex: 1; padding-left: 2px; line-height: 9px; }
.type-menu { position: absolute; top: 41px; left: 0; width: 122px; background: #fff; border: 1px solid #777; border-top: 0; box-shadow: 1px 1px 2px #888; }
.search { display: flex; align-items: center; height: 13px; padding: 0 3px; border-bottom: 1px solid #ccc; }
.search input { flex: 1; min-width: 0; outline: 0; font-style: italic; }
.search input::placeholder { color: #888; opacity: 1; }
.family { display: flex; align-items: center; height: 21px; }
.family-icon { display: flex; justify-content: center; width: 20px; }
.family-name { flex: 1; padding: 4px 2px; background: #dcdcdc; }
.option { width: 100%; height: 13px; justify-content: flex-start; padding-left: 21px; border: 1px solid transparent; }
.option.hover { background: #c5e6fa; border-color: #7cb5da; }
.option.chosen { background: #aad2f5; border-color: #5c9bd0; }
.recent { height: 11px; border-bottom: 1px dotted #bbb; text-align: center; font-style: italic; }
.last { height: 12px; padding-left: 3px; }
.cursor { position: absolute; top: 39px; left: 70px; width: 8px; height: 12px; }

.props { width: 122px; border-collapse: collapse; table-layout: fixed; }
.props tr { height: 11px; }
.props th, .props td { padding: 0 0 0 1px; line-height: 10px; font-weight: 400; text-align: left; white-space: nowrap; border-bottom: 1px dashed #c2c2c2; border-right: 1px dashed #c2c2c2; }
.props th { width: 58px; padding-left: 6px; }
.props td:last-child { width: 7px; padding: 0; }
.props .group { height: 12px; background: #dedede; }
.props .group th { width: 115px; padding-left: 1px; line-height: 11px; }
.props .group th, .props .group td { border: 0; }
.props .pick { background: #ddd; border: 1px solid #aaa; }
.props .focus { border: 1px solid #222; }
.props-foot { display: flex; justify-content: space-between; align-items: center; height: 13px; margin-top: auto; padding: 0 2px; background: #f0f0f0; }
.props-foot a { color: #1c78b8; text-decoration: underline; }
.props-foot button { width: 41px; height: 11px; background: #c8c8c8; color: #999; }

.viewer { display: flex; flex-direction: column; flex: 1; min-width: 0; }
.doc-tabs { display: flex; height: 12px; background: #cbcbcb; line-height: 12px; }
.doc, .doc a { display: flex; align-items: center; gap: 3px; }
.doc { width: 72px; padding-left: 3px; color: #444; }
.doc.idle { background: #bebebe; margin-right: 1px; }
.doc.active { justify-content: space-between; padding-right: 2px; background: #fff; font-weight: 700; }
.doc-list { width: 10px; margin-left: auto; }
.canvas { position: relative; display: flex; flex: 1; min-height: 0; }
.drawing { flex: 1; min-width: 0; height: 100%; }
.bubbles text { fill: #333; font: 8px "Liberation Sans", sans-serif; text-anchor: middle; }
.navbar { position: absolute; top: 1px; right: 12px; display: flex; flex-direction: column; align-items: center; gap: 2px; width: 20px; height: 67px; padding: 1px; background: #f7f7f7; border: 1px solid #bbb; border-radius: 2px; opacity: .8; }
.navbar button:first-child { align-self: flex-end; }
.navbar .end { align-self: flex-end; margin-top: auto; }
.vscroll { display: flex; flex-direction: column; justify-content: space-between; align-items: center; width: 10px; padding: 3px 0; background: #f0f0f0; }
.thumb-v { width: 8px; height: 10px; background: #c8c8c8; }
.viewbar { display: flex; align-items: center; height: 13px; padding-left: 13px; }
.scale { width: 24px; }
.view-tools { display: flex; padding-left: 7px; }
.view-tools button { width: 12px; }
.hscroll { display: flex; justify-content: flex-end; align-items: center; flex: 1; gap: 306px; height: 11px; padding-right: 13px; background: #f2f2f2; }
.thumb-h { width: 9px; height: 8px; background: #c8c8c8; }

.browser { flex: none; width: 133px; border-left: 2px solid #c9c9c9; }
.tree, .tree ul { margin: 0; padding: 0; list-style: none; }
.tree { padding: 0 0 0 2px; }
.tree ul { padding-left: 11px; position: relative; }
.tree ul::before { content: ""; position: absolute; top: 0; bottom: 0; left: 3px; border-left: 1px dotted #bbb; }
.tree ul ul::before { bottom: 5px; left: 4px; }
.tree .gap { padding-top: 1px; }
.node { display: flex; align-items: center; height: 11px; gap: 3px; white-space: nowrap; color: #222; }
.tree > li > ul > li > .node { gap: 7px; }
.tree ul ul .node { padding-left: 8px; }
.node b { padding: 0 1px; background: #dcdcdc; line-height: 10px; }
.node i { position: relative; width: 6px; height: 6px; }
.minus, .plus { border: 1px solid #aaa; background: #fff; }
.minus::before, .plus::before { content: ""; position: absolute; top: 1px; left: 0; width: 4px; border-top: 1px solid #777; }
.plus::after { content: ""; position: absolute; top: 0; left: 1px; height: 4px; border-left: 1px solid #777; }

/* Status bar */
.status { display: flex; align-items: center; height: 11px; background: #cbcbcb; color: #222; }
.hint { width: 49%; white-space: nowrap; }
.status button { width: 14px; }
.combo { position: relative; display: flex; width: 115px; height: 11px; background: #fff; color: #888; }
.combo select { width: 100%; padding-left: 2px; }
.combo svg { position: absolute; top: 3px; right: 3px; pointer-events: none; }
.requests { display: flex; align-items: center; gap: 3px; width: 33px; padding-left: 4px; }
.picks { display: flex; margin-left: auto; padding-right: 29px; }
.picks button { width: 15px; }
.picks .count { width: 26px; }
```
